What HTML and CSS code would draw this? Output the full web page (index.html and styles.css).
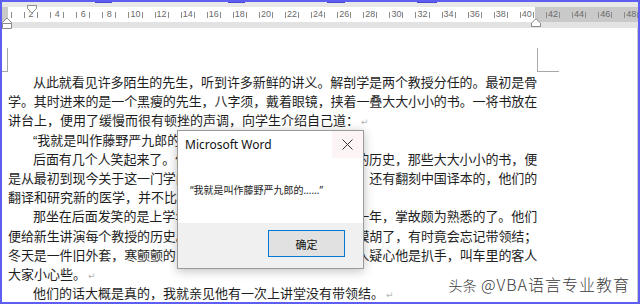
FILE: index.html
```html
<!DOCTYPE html>
<html lang="zh-CN">
<head>
    <meta charset="UTF-8">
    <meta name="viewport" content="width=device-width, initial-scale=1.0">
    <title>Microsoft Word</title>
    <link rel="stylesheet" href="styles.css">
</head>
<body>

<div class="frame">

    <!-- Ruler -->
    <div class="ruler">
        <div class="ruler-top">
            <span class="blot" style="margin-left: 93px; width: 17px;"></span>
            <span class="blot" style="margin-left: 116px; width: 17px;"></span>
            <span class="blot" style="margin-left: 82px; width: 18px;"></span>
            <span class="blot" style="margin-left: 72px; width: 20px;"></span>
        </div>
        <div class="ruler-scale">
            <span class="ruler-margin"></span>
            <span class="ruler-half"><i></i></span>
            <span class="cell"><i></i><b>2</b><i></i></span>
            <span class="cell"><i></i><b>4</b><i></i></span>
            <span class="cell"><i></i><b>6</b><i></i></span>
            <span class="cell"><i></i><b>8</b><i></i></span>
            <span class="cell"><i></i><b>10</b><i></i></span>
            <span class="cell"><i></i><b>12</b><i></i></span>
            <span class="cell"><i></i><b>14</b><i></i></span>
            <span class="cell"><i></i><b>16</b><i></i></span>
            <span class="cell"><i></i><b>18</b><i></i></span>
            <span class="cell"><i></i><b>20</b><i></i></span>
            <span class="cell"><i></i><b>22</b><i></i></span>
            <span class="cell"><i></i><b>24</b><i></i></span>
            <span class="cell"><i></i><b>26</b><i></i></span>
            <span class="cell"><i></i><b>28</b><i></i></span>
            <span class="cell"><i></i><b>30</b><i></i></span>
            <span class="cell"><i></i><b>32</b><i></i></span>
            <span class="cell"><i></i><b>34</b><i></i></span>
            <span class="cell"><i></i><b>36</b><i></i></span>
            <span class="cell"><i></i><b>38</b><i></i></span>
            <span class="cell"><i></i><b>40</b><i></i></span>
            <span class="cell"><i></i><b>42</b><i></i></span>
            <span class="cell"><i></i><b>44</b><i></i></span>
            <span class="cell"><i></i><b>46</b><i></i></span>
            <span class="cell"><i></i><b>48</b><i></i></span>
        </div>
        <div class="ruler-bottom"></div>

        <!-- indent markers -->
        <svg class="marker marker-first" width="12" height="10" viewBox="0 0 12 10">
            <path d="M1.5 0.5 H10.5 V3.5 L6 8 L1.5 3.5 Z" fill="#fff" stroke="#8a8a8a"/>
        </svg>
        <svg class="marker marker-left" width="12" height="12" viewBox="0 0 12 12">
            <path d="M1.5 5.5 L6 1 L10.5 5.5 V11.5 H1.5 Z M1.5 6.5 H10.5" fill="#fff" stroke="#8a8a8a"/>
        </svg>
        <svg class="marker marker-right" width="12" height="9" viewBox="0 0 12 9">
            <path d="M1.5 5 L6 0.8 L10.5 5 V8.5 H1.5 Z" fill="#fff" stroke="#8a8a8a"/>
        </svg>
    </div>

    <!-- Document page -->
    <div class="page">
        <div class="corner-row">
            <span class="corner-left"></span>
            <span class="corner-right"></span>
        </div>

        <div class="text">
            <div class="line full indent">从此就看见许多陌生的先生，听到许多新鲜的讲义。解剖学是两个教授分任的。最初是骨</div>
            <div class="line full">学。其时进来的是一个黑瘦的先生，八字须，戴着眼镜，挟着一叠大大小小的书。一将书放在</div>
            <div class="line">讲台上，便用了缓慢而很有顿挫的声调，向学生介绍自己道：<span class="pilcrow">↵</span></div>
            <div class="line indent">“我就是叫作藤野严九郎的……”<span class="pilcrow">↵</span></div>
            <div class="line full indent">后面有几个人笑起来了。他接着便讲述解剖学在日本发达的历史，那些大大小小的书，便</div>
            <div class="line full">是从最初到现今关于这一门学问的著作。起初有几本是线装的；还有翻刻中国译本的，他们的</div>
            <div class="line">翻译和研究新的医学，并不比中国早。<span class="pilcrow">↵</span></div>
            <div class="line full indent">那坐在后面发笑的是上学年不及格的留级学生，在校已经一年，掌故颇为熟悉的了。他们</div>
            <div class="line full">便给新生讲演每个教授的历史。这藤野先生，据说是穿衣服太模胡了，有时竟会忘记带领结；</div>
            <div class="line full">冬天是一件旧外套，寒颤颤的，有一回上火车去，致使管车的人疑心他是扒手，叫车里的客人</div>
            <div class="line">大家小心些。<span class="pilcrow">↵</span></div>
            <div class="line indent">他们的话大概是真的，我就亲见他有一次上讲堂没有带领结。<span class="pilcrow">↵</span></div>
        </div>
    </div>

    <!-- Message box -->
    <div class="dialog">
        <div class="dialog-title">
            <span class="dialog-caption">Microsoft Word</span>
            <span class="dialog-close">
                <svg width="11" height="11" viewBox="0 0 11 11">
                    <path d="M0.5 0.5 L10.5 10.5 M10.5 0.5 L0.5 10.5" stroke="#333" stroke-width="1"/>
                </svg>
            </span>
        </div>
        <div class="dialog-body">“我就是叫作藤野严九郎的……”</div>
        <div class="dialog-footer">
            <button class="dialog-button">确定</button>
        </div>
    </div>

    <div class="watermark"><span class="wm-logo">头条</span> @VBA语言专业教育</div>
</div>

</body>
</html>
```

FILE: styles.css
```css
/* General body styling */
body {
    margin: 0;
    font-family: 'Liberation Sans', 'Noto Sans CJK SC', sans-serif;
    background-color: #ffffff;
}

/* Outer frame with the blue selection border */
.frame {
    position: relative;
    width: 640px;
    height: 304px;
    box-sizing: border-box;
    border: 2px solid #5e5ef2;
    overflow: hidden;
    display: flex;
    flex-direction: column;
}

/* Ruler */
.ruler {
    position: relative;
    flex: none;
}

.ruler-top {
    height: 5px;
    background-color: #e8e8e8;
    display: flex;
    align-items: flex-start;
}

.blot {
    height: 1px;
    background-color: #4848d0;
}

.ruler-scale {
    height: 15px;
    display: flex;
    align-items: center;
    background: linear-gradient(to right, #ffffff 533px, #c9c9c9 533px);
    color: #6a6a6a;
    font-size: 9px;
    line-height: 1;
}

.ruler-margin {
    width: 6px;
    height: 15px;
    background-color: #c9c9c9;
    flex: none;
}

.ruler-half {
    width: 10.05px;
    flex: none;
    display: flex;
    padding-left: 3px;
    box-sizing: border-box;
}

.cell {
    width: 26.1px;
    flex: none;
    display: flex;
    justify-content: space-between;
    align-items: center;
    padding: 0 6px;
    box-sizing: border-box;
}

.cell i, .ruler-half i {
    display: block;
    width: 1px;
    height: 6px;
    background-color: #8c8c8c;
}

.cell b {
    font-weight: normal;
}

.ruler-bottom {
    height: 6px;
    background-color: #e3e3e3;
}

.marker {
    position: absolute;
    display: block;
}

.marker-first {
    left: 24px;
    top: 3px;
}

.marker-left {
    left: -1px;
    top: 15px;
}

.marker-right {
    left: 528px;
    top: 16px;
}

/* Page */
.page {
    flex: 1;
    background-color: #ffffff;
    border-right: 1px solid #cccccc;
    padding-top: 20px;
}

.corner-row {
    display: flex;
    height: 24px;
}

.corner-left {
    width: 5px;
    border-right: 1px solid #a8a8a8;
    border-bottom: 1px solid #a8a8a8;
}

.corner-right {
    margin-left: 529px;
    width: 21px;
    border-left: 1px solid #a8a8a8;
    border-bottom: 1px solid #a8a8a8;
}

.text {
    margin-left: 6px;
    margin-top: 1px;
    width: 529px;
    font-size: 13px;
    line-height: 19.2px;
    color: #1e1e1e;
}

.line {
    height: 19.2px;
    white-space: nowrap;
}

.line.full {
    text-align: justify;
    text-align-last: justify;
    letter-spacing: -0.2px;
}

.indent {
    padding-left: 25px;
}

.pilcrow {
    color: #b4b4b4;
    font-family: 'DejaVu Sans', sans-serif;
    font-size: 9px;
    margin-left: 2px;
}

/* Message box */
.dialog {
    position: absolute;
    left: 175px;
    top: 128px;
    width: 185px;
    height: 137px;
    border: 1px solid #9a9a9a;
    background-color: #ffffff;
    box-shadow: 0 2px 10px rgba(0, 0, 0, 0.25);
    display: flex;
    flex-direction: column;
    font-family: 'Noto Sans', 'Noto Sans CJK SC', sans-serif;
}

.dialog-title {
    height: 27px;
    display: flex;
    align-items: center;
    justify-content: space-between;
}

.dialog-caption {
    padding-left: 7px;
    font-size: 12px;
    color: #111;
}

.dialog-close {
    width: 31px;
    height: 27px;
    display: flex;
    align-items: center;
    justify-content: center;
    background-color: #fdf5f5;
}

.dialog-body {
    height: 65px;
    display: flex;
    align-items: center;
    padding-left: 12px;
    font-size: 10px;
    color: #222;
    padding-bottom: 2px;
    box-sizing: border-box;
}

.dialog-footer {
    flex: 1;
    background-color: #f0f0f0;
    display: flex;
    justify-content: flex-end;
    align-items: flex-start;
    padding: 7px 18px 0 0;
}

.dialog-button {
    width: 77px;
    height: 27px;
    border: 1px solid #0078d7;
    background-color: #e1e1e1;
    box-shadow: inset 0 0 0 1px #e1e1e1;
    font-family: 'Noto Sans CJK SC', sans-serif;
    font-size: 11px;
    color: #111;
    padding: 0;
}

/* Watermark */
.watermark {
    position: absolute;
    right: 8px;
    bottom: 8px;
    font-family: 'Noto Sans CJK SC', sans-serif;
    font-weight: 300;
    font-size: 16px;
    line-height: 18px;
    color: #3a3a3a;
    letter-spacing: 1px;
    text-shadow: 0 0 2px #fff, 0 0 2px #fff;
}

.wm-logo {
    font-size: 14px;
    letter-spacing: 0;
}
```
